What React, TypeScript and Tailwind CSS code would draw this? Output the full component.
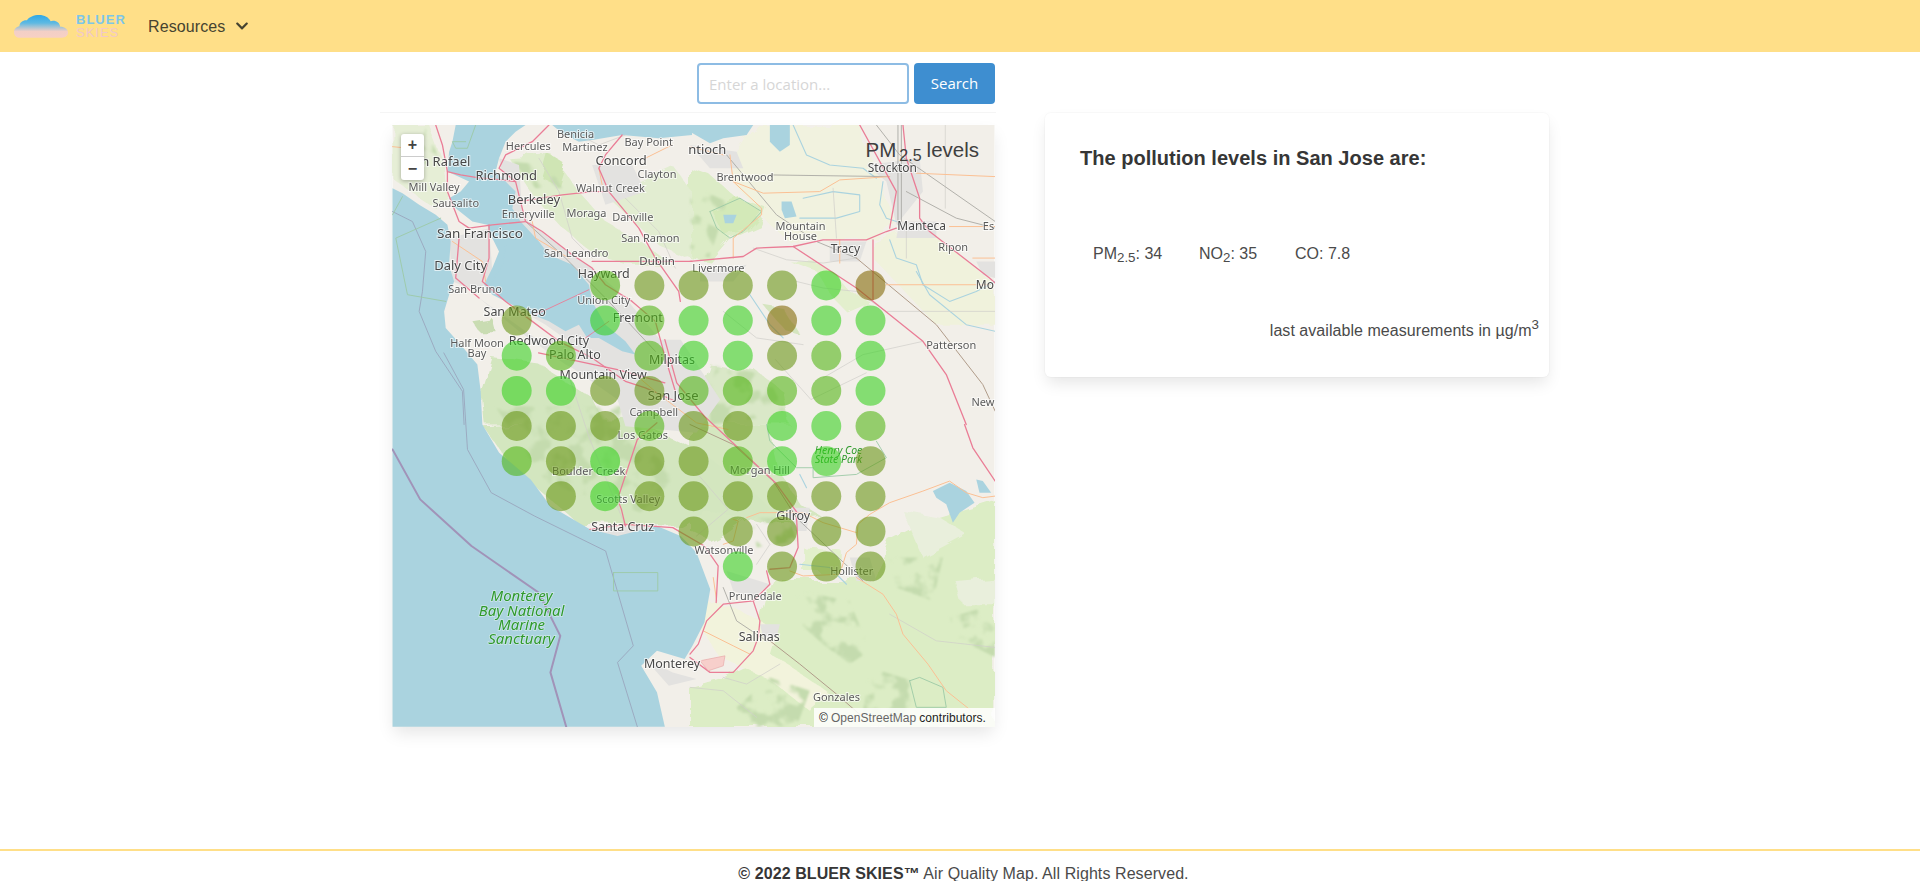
import { FaChevronDown } from "react-icons/fa";

// points are read off 3x crops of the map, each helper turns one crop's units into map pixels
const conv = (s: string, f: (x: number, y: number) => [number, number]) =>
  s.split(" ").map((p) => {
    const [x, y] = p.split(",").map(Number);
    const [a, b] = f(x, y);
    return `${a.toFixed(1)},${b.toFixed(1)}`;
  });
const A = (s: string) => conv(s, (x, y) => [x / 3, y / 3]);
const B = (s: string) => conv(s, (x, y) => [x / 3 + 298, y / 3]);
const C = (s: string) => conv(s, (x, y) => [x / 3 + 298, y / 3 + 300]);
const bot = (s: string) => conv(s, (x, y) => [(x - 30) / 2.529, y / 3 + 215]);
const line = (pts: string[]) => "M" + pts.join(" L");
const shape = (pts: string[]) => line(pts) + " Z";

const WATER = [
  [
    ...A("0,190 30,205 80,240 130,270 165,300 175,350 170,420 185,470 170,510 155,560 160,610 205,660 255,720 265,800 270,900"),
    ...bot("300,340 380,420 430,500 530,570 600,590 700,560 760,590 800,640 835,750 820,850 790,920 770,960 700,935 660,980 700,1060 720,1163 30,1163"),
  ],
  A("190,0 400,0 370,20 340,50 320,100 310,140 340,170 370,200 360,250 385,290 440,350 470,390 540,420 590,480 600,530 640,600 700,650 730,690 690,680 620,640 585,640 560,600 520,620 470,590 420,570 360,540 300,510 275,480 300,430 320,380 295,330 285,300 240,290 190,250 170,220 205,200 230,170 165,140 170,80 180,50"),
  A("480,0 900,0 900,30 800,40 690,30 600,45 560,50 510,25"),
  B("0,0 190,0 170,30 100,40 60,55 0,20"),
  B("240,0 300,0 300,60 270,80 240,50"),
  B("275,230 305,230 320,275 285,280 275,255"),
  B("100,270 140,270 130,295 105,295"),
  C("730,200 780,175 830,200 855,235 810,265 790,295 770,240 740,220"),
  C("860,165 880,170 905,205 870,205"),
];

const RIVERS = [
  B("310,0 350,90 420,120 520,130 560,160"),
  B("340,220 430,200 510,210 510,260 440,280 330,280"),
  B("580,170 570,240 590,280 620,290"),
  B("600,345 620,400 680,420 700,480 780,530 860,500 917,470"),
  B("680,440 720,510 830,600 917,620"),
  B("180,510 240,600 280,640"),
  C("330,150 350,190"),
  C("330,420 420,430 470,480"),
  A("340,360 330,420 300,470"),
  A("390,300 450,370"),
];

const PATCHES: [string[], string][] = [
  [B("190,0 510,0 610,290 560,340 400,345 310,360 240,300 120,160 130,90"), "#f1f2df"],
  [B("550,350 620,320 720,320 917,480 917,600 740,600 550,400"), "#f0f2dc"],
  [B("0,130 60,150 140,220 230,250 210,300 120,340 60,410 0,400"), "#dcecc6"],
  [B("60,250 150,220 215,260 170,310 100,330"), "#d3e9b8"],
  [B("300,410 380,410 430,440 480,500 540,530 470,560 430,520 380,440"), "#e3efcd"],
  [B("220,540 280,550 330,630 290,620"), "#d5e5bf"],
  [A("350,100 480,90 560,200 640,290 760,360 840,420 700,420 620,400 500,300 420,210"), "#dfeccc"],
  [A("640,210 840,120 900,200 900,400 800,360"), "#e2edd1"],
  [A("0,0 110,0 160,130 170,220 130,250 40,190 0,160"), "#e6eed6"],
  [A("470,90 520,120 500,180 450,160"), "#cfe5b4"],
  [A("240,590 300,580 310,620 260,620"), "#c9dcb2"],
  [A("300,700 440,720 600,820 640,900 280,900 270,800"), "#d3e6bf"],
  [B("60,720 200,740 280,800 300,900 0,900"), "#dae8c8"],
  [C("0,0 230,0 260,130 330,240 400,280 250,300 170,280 100,330 60,350 0,320"), "#d5e7c0"],
  [bot("260,260 640,240 800,330 920,430 980,500 930,540 820,520 760,560 500,550 420,470 330,380"), "#d3e6bf"],
  [C("250,470 540,470 600,350 720,290 917,230 917,909 0,909 0,790 100,760 180,720 240,640 210,600 230,520"), "#dcedc5"],
  [C("0,560 100,530 260,620 240,690 350,760 420,810 360,860 230,760 90,700"), "#f2f3dc"],
  [C("640,260 750,280 830,330 700,400"), "#e9efdc"],
  [C("800,470 917,460 917,540 820,540"), "#e9efdc"],
  [C("340,370 450,375 450,440 340,440"), "#e2f0cb"],
];

// darker, blotchy woodland, cut up by the noise filter
const WOODS = [
  C("330,500 480,530 540,680 480,720 400,660 300,570"),
  C("780,580 917,540 917,700 800,640"),
  C("240,760 360,800 320,909 170,909 140,850"),
  C("600,400 760,400 730,530 620,490"),
  C("540,730 700,780 620,909 520,860"),
  C("180,280 300,280 320,350 200,370"),
  B("0,180 110,230 60,400 0,380"),
  B("60,720 230,750 290,870 60,900"),
  bot("290,200 620,200 740,420 660,520 420,430"),
  A("100,10 140,100 60,130"),
  A("360,110 470,120 510,190 430,190"),
];

const URBAN = [
  A("170,340 290,310 300,440 260,500 180,470"),
  A("320,100 380,120 390,270 470,340 600,430 700,520 800,640 860,800 900,900 720,830 600,700 460,600 340,530 400,480"),
  A("260,520 400,620 500,690 640,760 700,810 520,720 380,620"),
  A("600,120 720,120 760,200 640,240"),
  B("0,60 140,80 160,130 60,130"),
  B("30,440 170,420 130,470 30,470"),
  B("420,350 530,350 510,410 420,410"),
  B("530,120 690,100 700,200 620,300 590,170"),
  B("630,290 740,290 740,340 620,340"),
  B("860,410 917,410 917,460 880,450"),
  bot("400,0 760,0 860,180 800,280 620,260 600,180 480,80"),
  C("290,250 360,250 350,320 310,320"),
  C("480,400 540,400 560,470 500,470"),
  C("110,440 240,480 190,520 130,500"),
  C("210,600 270,600 260,640 220,640"),
  bot("670,960 740,1000 800,1020 730,1040"),
  bot("540,570 700,555 700,590 560,590"),
];

const SMALL_ROADS = [
  B("190,370 290,405 400,415 500,400"),
  B("320,470 400,490 500,500 590,560 917,560"),
  B("400,760 520,690 700,650"),
  B("650,300 650,400"),
  B("767,0 767,250"),
  B("430,190 440,340"),
  B("100,560 200,640 340,660"),
  C("600,570 740,650 917,670"),
  C("0,790 100,800 200,880"),
  C("100,760 170,780 270,720"),
  C("200,300 240,360 200,420"),
  A("440,100 500,200 540,340 600,400"),
  A("700,220 800,320 850,430"),
  A("560,30 620,60 700,30"),
  bot("1000,60 1090,180 1230,100"),
  bot("480,120 530,300 620,560"),
  bot("800,400 880,510 800,590"),
];

const RAIL = [
  B("625,0 625,300"),
  B("635,0 635,290"),
  B("560,0 630,90 917,290"),
  B("240,150 600,155"),
  B("650,200 800,280 917,310"),
  B("110,90 260,270 380,350 500,400"),
  C("100,490 140,590 230,650"),
  C("330,290 520,470"),
  A("400,290 520,400 640,520 790,680"),
];

const BROWN_RAIL = [
  B("500,400 740,600 880,780 917,860"),
  C("240,650 330,720 440,810 520,880"),
  C("0,0 130,60 250,170 320,280"),
];

const TRUNK = [
  C("300,440 340,455 450,450 470,385 500,360 505,300 540,270 600,235 700,200 780,170 830,205 880,220 917,215"),
  C("500,460 580,510 620,570 640,630 715,720 770,800 870,880"),
  C("170,280 210,265 340,265 400,295 450,310 500,325"),
  C("40,620 130,665 180,690"),
  C("70,460 80,530"),
  C("130,285 145,290 130,350 100,360"),
  B("130,170 220,205 390,200 450,165 600,155"),
  B("120,90 130,170 215,250 215,270 130,340 130,400"),
  B("680,145 917,155"),
  B("590,480 900,480"),
  B("780,305 917,305"),
  B("850,400 917,400"),
  B("450,345 450,415"),
  B("0,65 100,90"),
  A("0,65 50,70"),
  A("620,130 630,180"),
  A("420,290 430,340 530,400"),
  A("760,100 840,60"),
  A("180,350 270,410 280,470"),
  bot("640,100 700,160 800,250 880,270"),
];

const MOTORWAY = [
  A("130,0 150,60 165,140 205,150 255,158 330,165 370,170 385,230 400,290 450,320 540,390 600,430 640,480 720,530 790,590 820,700 850,800"),
  A("470,0 420,50 340,90 320,130 370,170"),
  A("690,30 640,90 620,130 650,200 740,310 790,400 860,500 865,530"),
  A("400,290 300,300 230,310 200,290 165,200 165,140"),
  A("380,230 510,210 600,200 650,200"),
  A("290,300 290,400 270,470 340,530 420,590 500,650 600,700 700,770 760,790 850,830"),
  A("200,340 190,460 260,520"),
  A("600,410 700,410 860,410 900,410"),
  B("0,410 160,395 200,370 310,365 400,345 530,345 590,320 620,310"),
  B("310,365 500,490 700,650 770,750 830,900"),
  B("510,0 620,200 600,310"),
  B("640,0 650,100 690,220 690,280 720,320 900,460 917,475"),
  B("550,345 550,525"),
  C("825,0 850,70 917,170"),
  C("320,280 325,370 300,430 240,435"),
  C("230,440 240,480 190,530 210,590 205,640 190,680 130,745 60,745 0,700"),
  C("190,530 100,540 50,590 25,660 0,690"),
  bot("400,40 600,90 720,130"),
  bot("720,0 750,130 820,230 1000,430 1055,520"),
  bot("620,560 610,510 600,480 650,300 700,250"),
  bot("530,570 620,555 740,565 820,620 855,680 850,790"),
];

const TOP_LABELS: [string, number, number, number?][] = [
  ["n Rafael", 160, 112, 13],
  ["Benicia", 550, 30],
  ["Hercules", 408, 65],
  ["Martinez", 578, 68],
  ["Bay Point", 770, 55],
  ["Concord", 687, 110, 13],
  ["Richmond", 342, 155, 13],
  ["Clayton", 795, 150],
  ["Mill Valley", 125, 188],
  ["Walnut Creek", 655, 192],
  ["Berkeley", 425, 228, 13],
  ["Sausalito", 190, 239],
  ["Emeryville", 408, 270],
  ["Moraga", 583, 267],
  ["Danville", 722, 279],
  ["San Francisco", 263, 328, 13.5],
  ["San Ramon", 775, 343],
  ["San Leandro", 552, 387],
  ["Daly City", 205, 426, 13],
  ["Dublin", 795, 412, 11.5],
  ["Hayward", 635, 450, 12.5],
  ["San Bruno", 248, 496],
  ["Union City", 635, 529],
  ["San Mateo", 367, 565, 12.5],
  ["Fremont", 737, 581, 12.5],
  ["Half Moon", 254, 658],
  ["Redwood City", 470, 650, 12.5],
  ["Bay", 254, 688],
  ["Palo Alto", 548, 694, 12.5],
  ["Milpitas", 840, 707, 12.5],
  ["Mountain View", 633, 754, 12.5],
  ["Campbell", 785, 867],
];

const EAST_LABELS: [string, number, number, number?][] = [
  ["ntioch", 52, 78, 13],
  ["Brentwood", 165, 159],
  ["Stockton", 608, 131, 12],
  ["Mountain", 332, 307],
  ["House", 332, 337],
  ["Manteca", 696, 306, 12],
  ["Es", 897, 308],
  ["Tracy", 467, 374, 12],
  ["Ripon", 791, 370],
  ["Livermore", 85, 433],
  ["Mo", 886, 482, 12],
  ["Patterson", 785, 664],
  ["New", 880, 837],
];

const SOUTH_LABELS: [string, number, number, number?][] = [
  ["Morgan Hill", 210, 139],
  ["Gilroy", 310, 276, 12.5],
  ["Watsonville", 102, 381],
  ["Hollister", 486, 444],
  ["Prunedale", 196, 518],
  ["Salinas", 208, 640, 12.5],
  ["Gonzales", 440, 822],
];

const WEST_LABELS: [string, number, number, number?][] = [
  ["San Jose", 741, 170, 13],
  ["Los Gatos", 664, 290],
  ["Boulder Creek", 527, 399],
  ["Scotts Valley", 627, 482],
  ["Santa Cruz", 613, 566, 12.5],
  ["Monterey", 738, 977, 12.5],
];

const PARK_LABELS: [string, number, number, number, boolean][] = [
  ["Henry Coe", 1160, 335, 10.5, false],
  ["State Park", 1160, 363, 10.5, false],
  ["Monterey", 357, 774, 15, true],
  ["Bay National", 357, 818, 15, true],
  ["Marine", 357, 861, 15, true],
  ["Sanctuary", 357, 904, 15, true],
];

// g green, m mixed, o olive, b brown, one row per measuring line
const GRID = [
  "..moooogb",
  "o.gmggbgg",
  "gm.mggomg",
  "ggoommmmg",
  "ooomooggm",
  "mogoomggo",
  ".ogoooooo",
  "....ooooo",
  ".....gooo",
];
const COLORS: Record<string, string> = {
  g: "#34d11c",
  m: "#50b512",
  o: "#669412",
  b: "#806600",
};

function MapLabel({ text, x, y, size = 11 }: { text: string; x: number; y: number; size?: number }) {
  return (
    <text
      x={x}
      y={y}
      textAnchor="middle"
      dominantBaseline="middle"
      fontSize={size}
      fill={size > 11 ? "#484848" : "#5a5a5a"}
      stroke="#ffffff"
      strokeOpacity={0.65}
      strokeWidth={2}
      paintOrder="stroke"
    >
      {text}
    </text>
  );
}

function Strokes({ list, color, width }: { list: string[][]; color: string; width: number }) {
  return (
    <g fill="none" stroke={color} strokeWidth={width} strokeLinejoin="round" strokeLinecap="round">
      {list.map((p, i) => (
        <path key={i} d={line(p)} />
      ))}
    </g>
  );
}

function MapDrawing() {
  return (
    <svg viewBox="0 0 603 603" className="block h-full w-full blur-[0.45px] font-['Noto_Sans',sans-serif]">
      <defs>
        <filter id="rough" filterUnits="userSpaceOnUse" x="-20" y="-20" width="643" height="643">
          <feTurbulence type="fractalNoise" baseFrequency="0.04" numOctaves="3" seed="7" result="n" />
          <feDisplacementMap in="SourceGraphic" in2="n" scale="14" />
        </filter>
        <filter id="blotch" filterUnits="userSpaceOnUse" x="0" y="0" width="603" height="603">
          <feTurbulence type="fractalNoise" baseFrequency="0.05" numOctaves="3" seed="11" result="n" />
          <feColorMatrix in="n" type="matrix" values="0 0 0 0 0 0 0 0 0 0 0 0 0 0 0 0 0 0 7 -3.4" result="m" />
          <feComposite in="SourceGraphic" in2="m" operator="in" result="c" />
          <feGaussianBlur in="c" stdDeviation="0.9" />
        </filter>
      </defs>
      <rect width="603" height="603" fill="#f2efe9" />
      <g filter="url(#rough)">
        {PATCHES.map(([p, fill], i) => (
          <path key={i} d={shape(p)} fill={fill} />
        ))}
      </g>
      <g filter="url(#blotch)" fill="#c4dbae">
        {WOODS.map((p, i) => (
          <path key={i} d={shape(p)} />
        ))}
      </g>
      <g fill="#e3e2e0">
        {URBAN.map((p, i) => (
          <path key={i} d={shape(p)} />
        ))}
      </g>
      <g fill="#aad3df">
        {WATER.map((p, i) => (
          <path key={i} d={shape(p)} />
        ))}
      </g>
      <Strokes list={RIVERS} color="#aad3df" width={1.1} />
      <Strokes list={[bot("30,330 100,480 230,620 400,760 455,890 430,1000 470,1163")]} color="#a193b8" width={2} />
      <Strokes
        list={[
          bot("160,40 210,150 220,330 280,460 390,530 570,635 640,920 600,970 650,1163"),
          A("0,260 60,290 100,380 90,500 80,560 130,680 210,800 215,900"),
        ]}
        color="#9aa6bd"
        width={0.9}
      />
      <Strokes
        list={[
          A("30,215 0,270"),
          A("145,280 10,340 45,510 160,530"),
          A("220,50 180,50 190,70 225,70 250,0"),
          bot("590,700 702,700 702,755 590,755 590,700"),
          C("230,0 240,50 320,130 370,130 370,160 500,150 590,100 560,50"),
          B("60,260 150,220 215,260 160,320 120,340 80,310 60,260"),
          C("660,770 690,760 760,790 770,850 680,850 660,770"),
        ]}
        color="#9ccaa6"
        width={0.9}
      />
      <Strokes list={SMALL_ROADS} color="#cfcec9" width={0.7} />
      <Strokes list={RAIL} color="#aaa9a4" width={0.9} />
      <Strokes list={BROWN_RAIL} color="#b09c8a" width={1} />
      <Strokes list={TRUNK} color="#fbc094" width={1} />
      <Strokes list={MOTORWAY} color="#ea7d96" width={1.3} />
      <Strokes list={[A("430,570 590,495"), A("580,640 650,590")]} color="#ea7d96" width={0.9} />
      <path d={shape(C("30,710 105,695 100,725 55,740"))} fill="#f7cfcb" stroke="#e6a3a3" strokeWidth="0.6" />
      {TOP_LABELS.map(([t, x, y, size]) => (
        <MapLabel key={t + x} text={t} x={x / 3} y={y / 3} size={size} />
      ))}
      {EAST_LABELS.map(([t, x, y, size]) => (
        <MapLabel key={t + x} text={t} x={x / 3 + 298} y={y / 3} size={size} />
      ))}
      {SOUTH_LABELS.map(([t, x, y, size]) => (
        <MapLabel key={t + x} text={t} x={x / 3 + 298} y={y / 3 + 300} size={size} />
      ))}
      {WEST_LABELS.map(([t, x, y, size]) => (
        <MapLabel key={t + x} text={t} x={(x - 30) / 2.529} y={y / 3 + 215} size={size} />
      ))}
      {PARK_LABELS.map(([t, x, y, size, halo]) => (
        <text
          key={t + y}
          x={(x - 30) / 2.529}
          y={y / 3 + 215}
          textAnchor="middle"
          dominantBaseline="middle"
          fontSize={size}
          fontStyle="italic"
          fill="#2f9a2c"
          stroke={halo ? "#cfe6ec" : "none"}
          strokeWidth={1.5}
          paintOrder="stroke"
        >
          {t}
        </text>
      ))}
      {GRID.map((row, r) =>
        row.split("").map((c, i) =>
          c === "." ? null : (
            <circle
              key={`${r}-${i}`}
              cx={124.4 + i * 44.3}
              cy={160.7 + r * 35.2}
              r={15}
              fill={COLORS[c]}
              fillOpacity={0.58}
            />
          ),
        ),
      )}
    </svg>
  );
}

function Logo() {
  return (
    <div className="flex items-center">
      <svg width="54" height="23" viewBox="0 0 54 23">
        <defs>
          <linearGradient id="cloud" x1="0" y1="0" x2="0" y2="1">
            <stop offset="0" stopColor="#2fa8e6" />
            <stop offset="0.35" stopColor="#5db9e2" />
            <stop offset="0.72" stopColor="#f3cfc6" />
            <stop offset="1" stopColor="#f7d0c4" />
          </linearGradient>
        </defs>
        <path
          d="M6 22.8C2.4 22.8 0 20.4 0 17.2 0 14 2.4 11.6 5.4 11.2 5.6 7.4 9 4.8 13 5.2 15 2 20 0 25 0 30.6 0 34.8 2.4 36.6 6.2 37.4 6 38.2 5.8 39 5.8 43 5.8 45.8 8.4 46.2 11.8 50.8 11.8 54 14.4 54 17.6 54 20.8 51.4 22.8 48 22.8Z"
          fill="url(#cloud)"
        />
      </svg>
      <div className="ml-2 flex w-[49px] flex-col text-[13px] leading-[13px] tracking-[1px]">
        <span className="font-bold text-[#7cc6e8]">BLUER</span>
        <span className="text-[#f0c8cc]">SKIES</span>
      </div>
    </div>
  );
}

export default function App() {
  return (
    <div className="flex h-[881px] flex-col overflow-hidden bg-white font-['Liberation_Sans',sans-serif] text-base text-[#4a4a4a]">
      <nav className="flex h-[52px] shrink-0 items-center bg-[#ffdf88] pl-[14px]">
        <Logo />
        <span className="ml-[23px] pt-[1px] tracking-[0.1px] text-[#464330]">Resources</span>
        <FaChevronDown className="ml-[10px] text-[14px] text-[#464330]" />
      </nav>

      <main className="flex flex-1 pl-[380px]">
        <section className="w-[616px]">
          <div className="flex justify-end gap-[5px] pr-[1px] pt-[11px] font-['Open_Sans',sans-serif]">
            <input
              placeholder="Enter a location..."
              className="h-[41px] w-[212px] rounded-[4px] border-2 border-[#8dbce4] bg-white px-[10px] text-[15px] placeholder:text-[#d6d6d6]"
            />
            <button className="h-[41px] w-[81px] rounded-[4px] bg-[#3e8ed0] text-[15px] text-white">Search</button>
          </div>
          <div className="mt-[8px] border-t border-[#f5f5f5] pl-[12px] pt-[12px]">
            <div className="relative h-[602px] w-[603px] shadow-[0_8px_16px_-2px_rgba(10,10,10,0.1)]">
              <MapDrawing />
              <div className="absolute left-[9px] top-[9px] flex w-[23px] flex-col overflow-hidden rounded-[3px] bg-white text-[#444] shadow-[0_1px_4px_rgba(0,0,0,0.3)]">
                <span className="flex h-[23px] items-center justify-center border-b border-[#ccc] text-[16px] font-bold leading-none">+</span>
                <span className="flex h-[23px] items-center justify-center text-[16px] font-bold leading-none">−</span>
              </div>
              <div className="absolute right-[16px] top-[13px] flex items-baseline text-[20.5px] leading-6 text-[#3f3f3f]">
                <span>PM</span>
                <sub className="ml-[3px] mr-[5px] text-[16px]">2.5</sub>
                <span>levels</span>
              </div>
              <div className="absolute bottom-0 right-0 flex h-[19px] w-[181px] items-center bg-white/85 pl-[5px] text-[12px] tracking-[0.05px] text-[#222]">
                <span>©</span>
                <span className="ml-[3px] text-[#666]">OpenStreetMap</span>
                <span className="ml-[3px]">contributors.</span>
              </div>
            </div>
          </div>
        </section>

        <section className="ml-[49px] mt-[61px] h-[264px] w-[504px] rounded-[6px] bg-white pl-[35px] pr-[10px] shadow-[0_8px_16px_-2px_rgba(10,10,10,0.1),0_0_0_1px_rgba(10,10,10,0.02)]">
          <h2 className="mt-[33px] text-[20px] font-bold leading-[24px] tracking-[0.02px] text-[#363636]">
            The pollution levels in San Jose are:
          </h2>
          <div className="mt-[72px] flex pl-[13px] leading-6">
            <span className="w-[106px]">
              PM<sub className="text-[13.33px]">2.5</sub>: 34
            </span>
            <span className="w-[96px]">
              NO<sub className="text-[13.33px]">2</sub>: 35
            </span>
            <span>CO: 7.8</span>
          </div>
          <p className="mt-[53px] text-right leading-6 tracking-[0.05px]">
            last available measurements in µg/m<sup className="text-[13.33px]">3</sup>
          </p>
        </section>
      </main>

      <footer className="h-[32px] shrink-0 border-t-2 border-[#ffdf88] pl-[7px] pt-[11px] text-center leading-6 tracking-[0.08px]">
        <strong className="font-bold text-[#363636]">© 2022 BLUER SKIES™</strong> Air Quality Map. All Rights Reserved.
      </footer>
    </div>
  );
}
